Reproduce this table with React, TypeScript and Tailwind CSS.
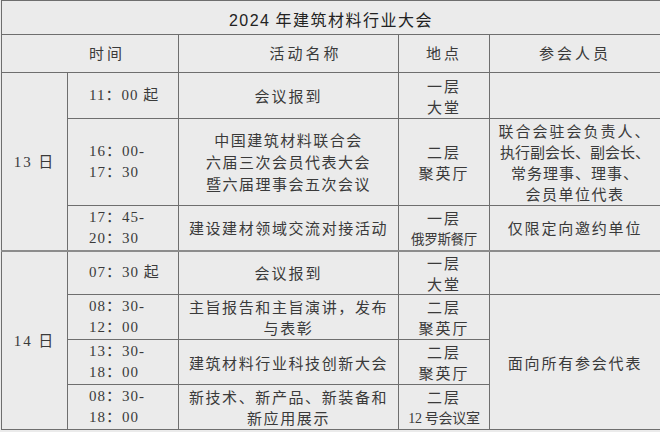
const cjk = '"Noto Sans CJK SC", sans-serif';
const serifNum = '"Liberation Serif", "Noto Sans CJK SC", serif';

function Time({ lines }: { lines: string[] }) {
  return (
    <td className="border border-[#6e6e6e] pl-[21px] text-left align-middle leading-[21px] tracking-[1px]" style={{ fontFamily: serifNum }}>
      {lines.map((l, i) => (
        <div key={i}>{l}</div>
      ))}
    </td>
  );
}

function Cell({ lines, className = '', rowSpan }: { lines: string[]; className?: string; rowSpan?: number }) {
  return (
    <td rowSpan={rowSpan} className={`border border-[#6e6e6e] text-center align-middle leading-[21px] ${className}`}>
      {lines.map((l, i) => (
        <div key={i}>{l}</div>
      ))}
    </td>
  );
}

export default function App() {
  return (
    <div className="min-h-screen w-[660px] bg-[#ebebeb] pl-px text-[15px] text-[#3a3a3a]" style={{ fontFamily: cjk }}>
      <table className="w-[659px] table-fixed border-collapse">
        <colgroup>
          <col className="w-[66px]" />
          <col className="w-[111px]" />
          <col className="w-[220px]" />
          <col className="w-[91px]" />
          <col className="w-[171px]" />
        </colgroup>
        <tbody>
          <tr className="h-[34px]">
            <td colSpan={5} className="border border-[#6e6e6e] pt-[4px] text-center text-[16px] tracking-[1.5px] text-[#222]">
              <span style={{ fontFamily: '"Liberation Sans", "Noto Sans CJK SC", sans-serif' }}>2024</span> 年建筑材料行业大会
            </td>
          </tr>
          <tr className="h-[38px]">
            <td colSpan={2} className="border border-[#6e6e6e] pl-[34px] text-center tracking-[3px]">时间</td>
            <td className="border border-[#6e6e6e] pl-[34px] text-center tracking-[3px]">活动名称</td>
            <td className="border border-[#6e6e6e] text-center tracking-[3px]">地点</td>
            <td className="border border-[#6e6e6e] text-center tracking-[3px]">参会人员</td>
          </tr>

          <tr className="h-[46px]">
            <td rowSpan={3} className="border border-b-2 border-[#6e6e6e] border-b-[#8c8c8c] text-center tracking-[2px]">
              <span style={{ fontFamily: serifNum }}>13</span> 日
            </td>
            <Time lines={['11：00 起']} />
            <Cell lines={['会议报到']} className="tracking-[2px]" />
            <Cell lines={['一层', '大堂']} className="tracking-[2px]" />
            <Cell lines={['']} />
          </tr>
          <tr className="h-[87px]">
            <Time lines={['16：00-', '17：30']} />
            <Cell lines={['中国建筑材料联合会', '六届三次会员代表大会', '暨六届理事会五次会议']} className="leading-[22px] tracking-[1.5px]" />
            <Cell lines={['二层', '聚英厅']} className="tracking-[2px]" />
            <td className="border border-[#6e6e6e] text-center align-middle leading-[21px]">
              <div className="tracking-[2px]">联合会驻会负责人、</div>
              <div className="tracking-[0px]">执行副会长、副会长、</div>
              <div className="tracking-[1px]">常务理事、理事、</div>
              <div className="tracking-[1.5px]">会员单位代表</div>
            </td>
          </tr>
          <tr className="h-[45px] border-b-2 border-b-[#8c8c8c]">
            <Time lines={['17：45-', '20：30']} />
            <Cell lines={['建设建材领域交流对接活动']} className="tracking-[1.6px]" />
            <td className="border border-[#6e6e6e] text-center align-middle leading-[21px]">
              <div className="tracking-[2px]">一层</div>
              <div className="text-[13.5px] tracking-[-0.3px]">俄罗斯餐厅</div>
            </td>
            <Cell lines={['仅限定向邀约单位']} className="tracking-[1.8px]" />
          </tr>

          <tr className="h-[44px]">
            <td rowSpan={4} className="border border-[#6e6e6e] text-center tracking-[2px]">
              <span style={{ fontFamily: serifNum }}>14</span> 日
            </td>
            <Time lines={['07：30 起']} />
            <Cell lines={['会议报到']} className="tracking-[2px]" />
            <Cell lines={['一层', '大堂']} className="tracking-[2px]" />
            <Cell lines={['']} />
          </tr>
          <tr className="h-[45px]">
            <Time lines={['08：30-', '12：00']} />
            <Cell lines={['主旨报告和主旨演讲，发布', '与表彰']} className="tracking-[1.6px]" />
            <Cell lines={['二层', '聚英厅']} className="tracking-[2px]" />
            <Cell rowSpan={3} lines={['面向所有参会代表']} className="tracking-[1.8px]" />
          </tr>
          <tr className="h-[45px]">
            <Time lines={['13：30-', '18：00']} />
            <Cell lines={['建筑材料行业科技创新大会']} className="tracking-[1.6px]" />
            <Cell lines={['二层', '聚英厅']} className="tracking-[2px]" />
          </tr>
          <tr className="h-[45px]">
            <Time lines={['08：30-', '18：00']} />
            <Cell lines={['新技术、新产品、新装备和', '新应用展示']} className="tracking-[1.6px]" />
            <td className="border border-[#6e6e6e] text-center align-middle leading-[21px]">
              <div className="tracking-[2px]">二层</div>
              <div className="text-[14px] tracking-[-0.2px]">
                <span style={{ fontFamily: serifNum }}>12</span> 号会议室
              </div>
            </td>
          </tr>
        </tbody>
      </table>
    </div>
  );
}
